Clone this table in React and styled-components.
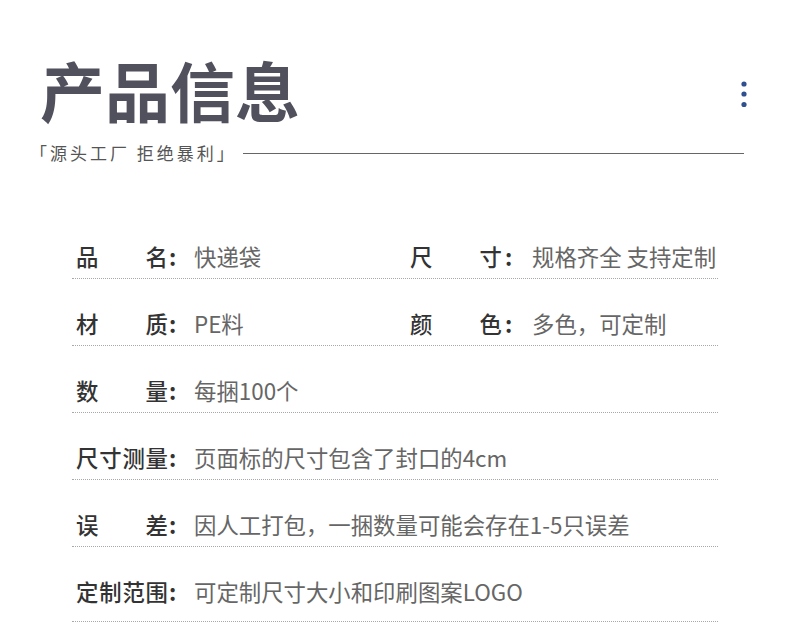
import React from "react";
import styled, { createGlobalStyle } from "styled-components";

const GlobalStyle = createGlobalStyle`
  html, body { margin: 0; padding: 0; background: #fff; }
  body { font-family: "Noto Sans CJK SC", "Noto Sans", sans-serif; }
`;

const Page = styled.div`
  width: 790px;
  height: 644px;
  box-sizing: border-box;
  padding-top: 57px;
  background: #fff;
  overflow: hidden;
`;

const Header = styled.header`
  padding: 0 46px 0 30px;
`;

const TitleRow = styled.div`
  display: flex;
  justify-content: space-between;
  align-items: flex-start;
`;

const Title = styled.h1`
  margin: 0;
  padding-left: 10px;
  font-size: 65px;
  line-height: 1;
  font-weight: 700;
  color: #50515d;
`;

const MoreIcon = styled.svg`
  display: block;
  margin-top: 24px;
  margin-right: -3px;
`;

const SubRow = styled.div`
  display: flex;
  align-items: center;
  margin-top: 21px;
`;

const Subtitle = styled.span`
  font-size: 17px;
  line-height: 20px;
  letter-spacing: 3px;
  color: #555;
  white-space: pre;
`;

const Rule = styled.div`
  flex: 1;
  height: 1px;
  background: #666;
  margin-left: 6px;
`;

const Table = styled.section`
  margin: 49px 0 0 72px;
  width: 646px;
`;

const Row = styled.div`
  display: grid;
  grid-template-columns: 334px 1fr;
  align-items: end;
  box-sizing: border-box;
  height: ${(p) => (p.$last ? 75 : 67)}px;
  padding: 0 0 ${(p) => (p.$last ? 15 : 7)}px 4px;
  border-bottom: 1px dotted #a8a8a8;
`;

const Field = styled.div`
  display: grid;
  grid-template-columns: 92px ${(p) => (p.$wide ? 30 : 26)}px auto;
  align-items: center;
  font-size: 22.4px;
  line-height: 30px;
`;

const Label = styled.span`
  display: flex;
  justify-content: space-between;
  color: #333;
  font-weight: 500;
`;

const Colon = styled.span`
  color: #333;
  font-weight: 700;
  padding-left: ${(p) => (p.$wide ? 3 : 1)}px;
`;

const Value = styled.span`
  color: #666;
  white-space: nowrap;
`;

const rows = [
  [
    ["品名", "快递袋"],
    ["尺寸", "规格齐全 支持定制"],
  ],
  [
    ["材质", "PE料"],
    ["颜色", "多色，可定制"],
  ],
  [["数量", "每捆100个"]],
  [["尺寸测量", "页面标的尺寸包含了封口的4cm"]],
  [["误差", "因人工打包，一捆数量可能会存在1-5只误差"]],
  [["定制范围", "可定制尺寸大小和印刷图案LOGO"]],
];

function InfoField({ label, value, wide }) {
  return (
    <Field $wide={wide}>
      <Label>
        {label.split("").map((c, i) => (
          <span key={i}>{c}</span>
        ))}
      </Label>
      <Colon $wide={wide}>:</Colon>
      <Value>{value}</Value>
    </Field>
  );
}

export default function App() {
  return (
    <>
      <GlobalStyle />
      <Page>
        <Header>
          <TitleRow>
            <Title>产品信息</Title>
            <MoreIcon width="6" height="27" viewBox="0 0 6 27">
              <circle cx="3" cy="3" r="2.6" fill="#2f4f8e" />
              <circle cx="3" cy="13" r="2.6" fill="#2f4f8e" />
              <circle cx="3" cy="23.5" r="2.6" fill="#2f4f8e" />
            </MoreIcon>
          </TitleRow>
          <SubRow>
            <Subtitle>「源头工厂 拒绝暴利」</Subtitle>
            <Rule />
          </SubRow>
        </Header>
        <Table>
          {rows.map((r, i) => (
            <Row key={i} $last={i === rows.length - 1}>
              {r.map(([l, v], j) => (
                <InfoField key={l} label={l} value={v} wide={j === 1} />
              ))}
            </Row>
          ))}
        </Table>
      </Page>
    </>
  );
}
